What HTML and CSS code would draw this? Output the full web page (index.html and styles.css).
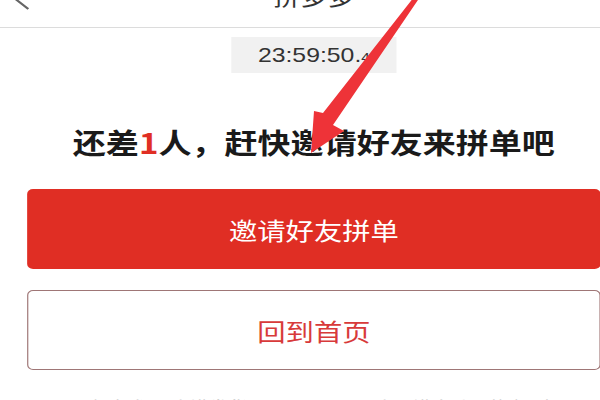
FILE: index.html
```html
<!DOCTYPE html>
<html lang="zh-CN">
<head>
<meta charset="utf-8">
<title>拼多多</title>
<link rel="stylesheet" href="styles.css">
</head>
<body>
<div class="screen">
  <header class="nav">
    <svg class="nav-back" width="16" height="28" viewBox="0 0 16 28"><polyline points="14,3 2,14 14,25" fill="none" stroke="#666" stroke-width="2"/></svg>
    <h1 class="nav-title">拼多多</h1>
    <span class="nav-spacer"></span>
  </header>
  <main class="content">
    <div class="countdown">23:59:50.<small>4</small></div>
    <h2 class="headline">还差<em>1</em>人，赶快邀请好友来拼单吧</h2>
    <button class="btn btn-primary">邀请好友拼单</button>
    <button class="btn btn-outline">回到首页</button>
    <div class="tips">
      <span class="tip tip-left">◦ 好友参团 人满发货</span>
      <span class="tip tip-right">人不满自动退款 规则</span>
    </div>
  </main>
</div>
<svg class="annotation-arrow" width="600" height="400" viewBox="0 0 600 400">
  <polygon points="311,153 344,131 333,125 420,-3 414,-3 323,113 314,111" fill="#ee3338"/>
</svg>
</body>
</html>
```

FILE: styles.css
```css
html, body {
  margin: 0;
  padding: 0;
  background: #fff;
}

body {
  width: 600px;
  height: 400px;
  position: relative;
  overflow: hidden;
  font-family: "Noto Sans CJK SC", "Noto Sans", sans-serif;
}

.screen {
  width: 532px;
  transform: scaleX(1.18);
  transform-origin: 0 0;
}

.nav {
  display: flex;
  align-items: flex-start;
  height: 27px;
  border-bottom: 1px solid #dcdcdc;
}

.nav-back {
  margin: -16px 0 0 10px;
  flex: none;
}

.nav-title {
  flex: 1;
  margin: -17px 0 0;
  font-size: 23px;
  line-height: 24px;
  font-weight: 400;
  text-align: center;
  color: #333;
}

.nav-spacer {
  width: 26px;
  flex: none;
}

.countdown {
  width: 140px;
  height: 36px;
  margin: 9px auto 0;
  background: #f1f1f1;
  font-family: "Liberation Sans", Arial, sans-serif;
  font-size: 21px;
  line-height: 36px;
  text-align: center;
  color: #333;
}

.countdown small {
  font-size: 13px;
}

.headline {
  margin: 49px 0 0;
  font-size: 28px;
  line-height: 40px;
  font-weight: 700;
  text-align: center;
  color: #1a1a1a;
}

.headline em {
  font-style: normal;
  color: #e02e24;
}

.btn {
  display: block;
  box-sizing: border-box;
  width: calc(100% - 46px);
  height: 80px;
  margin: 0 23px;
  border-radius: 5px;
  font-family: "Noto Sans CJK SC", "Noto Sans", sans-serif;
  font-size: 24px;
  padding: 0;
}

.btn-primary {
  margin-top: 27px;
  background: #e02e24;
  color: #fff;
  border: none;
}

.btn-outline {
  margin-top: 21px;
  background: #fff;
  border: 1.5px solid #9f7676;
  color: #d83a3a;
}

.tips {
  display: flex;
  gap: 40px;
  margin-top: 26px;
  padding-left: 58px;
  font-size: 16px;
  line-height: 20px;
  color: #cccccc;
}

.tip-left {
  width: 220px;
}

.annotation-arrow {
  position: absolute;
  left: 0;
  top: 0;
  pointer-events: none;
}
```
